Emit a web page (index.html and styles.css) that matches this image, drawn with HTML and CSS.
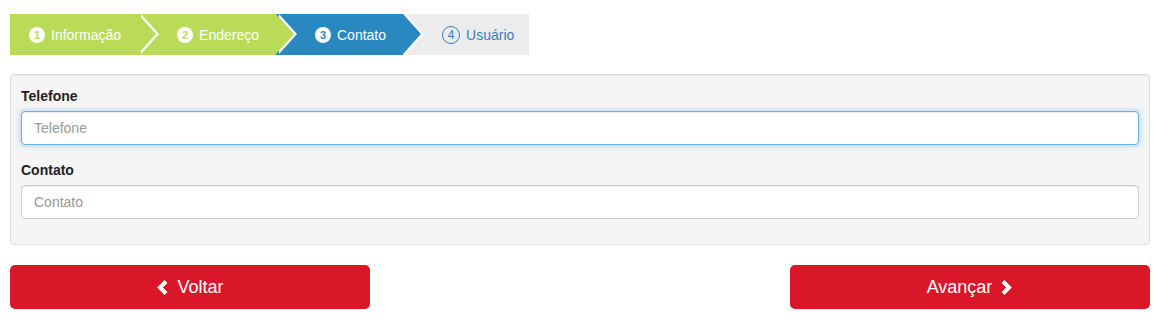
FILE: index.html
```html
<!DOCTYPE html>
<html lang="pt-BR">
<head>
  <meta charset="UTF-8" />
  <title>Cadastro - Contato</title>
  <link rel="stylesheet" href="styles.css">
</head>
<body>
  <div class="wizard">
    <ul class="steps">
      <li class="step done"><span class="num">1</span>Informação</li>
      <li class="step done"><span class="num">2</span>Endereço</li>
      <li class="step current"><span class="num">3</span>Contato</li>
      <li class="step todo"><span class="num">4</span>Usuário</li>
    </ul>

    <div class="well">
      <div class="form-group">
        <label for="telefone">Telefone</label>
        <input type="text" id="telefone" class="form-control is-focused" placeholder="Telefone">
      </div>
      <div class="form-group">
        <label for="contato">Contato</label>
        <input type="text" id="contato" class="form-control" placeholder="Contato">
      </div>
    </div>

    <div class="actions">
      <button class="btn-red" type="button">
        <svg width="13" height="15" viewBox="0 0 13 15"><path d="M10 1.5L4 7.5l6 6" fill="none" stroke="currentColor" stroke-width="4"/></svg>
        Voltar
      </button>
      <button class="btn-red" type="button">
        Avançar
        <svg width="13" height="15" viewBox="0 0 13 15"><path d="M3 1.5l6 6-6 6" fill="none" stroke="currentColor" stroke-width="4"/></svg>
      </button>
    </div>
  </div>
</body>
</html>
```

FILE: styles.css
```css
:root {
  --green: #b9db58;
  --blue: #2a88c0;
  --grey: #ececec;
  --red: #d91728;
  --text: #333333;
}

* {
  box-sizing: border-box;
}

body {
  margin: 0;
  background: #ffffff;
  font-family: 'Liberation Sans', Arial, sans-serif;
  font-size: 14px;
  color: var(--text);
}

.wizard {
  padding: 14px 12px 0 10px;
}

/* step bar */
.steps {
  list-style: none;
  margin: 0 0 19px;
  padding: 0;
  display: flex;
}

.step {
  position: relative;
  display: flex;
  align-items: center;
  gap: 6px;
  height: 41px;
  padding: 0 17px 0 39px;
  color: #ffffff;
}

.step:first-child {
  padding-left: 19px;
}

.step::before,
.step::after {
  content: "";
  position: absolute;
  top: 0;
  width: 0;
  height: 0;
  border-top: 20.5px solid transparent;
  border-bottom: 20.5px solid transparent;
  border-left: 18px solid #ffffff;
  z-index: 1;
}

.step::before {
  left: calc(100% + 3px);
}

.step::after {
  left: 100%;
}

.step:last-child::before,
.step:last-child::after {
  display: none;
}

.step.done { background: var(--green); }
.step.done::after { border-left-color: var(--green); }
.step.current { background: var(--blue); }
.step.current::after { border-left-color: var(--blue); }

.step.todo {
  background: var(--grey);
  color: #3b7dbd;
  padding-right: 15px;
}

.num {
  width: 16px;
  height: 16px;
  border-radius: 50%;
  background: #ffffff;
  display: flex;
  align-items: center;
  justify-content: center;
  font-size: 11px;
  font-weight: bold;
}

.done .num { color: var(--green); }
.current .num { color: var(--blue); }

.todo .num {
  width: 18px;
  height: 18px;
  background: transparent;
  border: 1px solid #3b7dbd;
  font-weight: normal;
  font-size: 12px;
}

/* form panel */
.well {
  background: #f5f5f5;
  border: 1px solid #dddddd;
  border-radius: 4px;
  box-shadow: inset 0 1px 1px rgba(0, 0, 0, 0.05);
  padding: 11px 10px 10px;
}

.form-group {
  margin-bottom: 15px;
}

.form-group label {
  display: block;
  font-weight: bold;
  line-height: 20px;
  margin-bottom: 5px;
  color: #222222;
}

.form-control {
  display: block;
  width: 100%;
  height: 34px;
  padding: 6px 12px;
  font-family: inherit;
  font-size: 14px;
  color: #555555;
  background: #ffffff;
  border: 1px solid #cccccc;
  border-radius: 4px;
  box-shadow: inset 0 1px 1px rgba(0, 0, 0, 0.075);
  outline: none;
}

.form-control::placeholder {
  color: #999999;
}

.form-control.is-focused,
.form-control:focus {
  border-color: #66afe9;
  box-shadow: inset 0 1px 1px rgba(0, 0, 0, 0.075), 0 0 6px rgba(102, 175, 233, 0.6);
}

/* buttons */
.actions {
  display: flex;
  justify-content: space-between;
  padding-top: 20px;
}

.btn-red {
  width: 360px;
  height: 44px;
  display: flex;
  align-items: center;
  justify-content: center;
  gap: 8px;
  background: var(--red);
  color: #ffffff;
  border: none;
  border-radius: 5px;
  font-family: inherit;
  font-size: 18px;
  cursor: pointer;
}
```
